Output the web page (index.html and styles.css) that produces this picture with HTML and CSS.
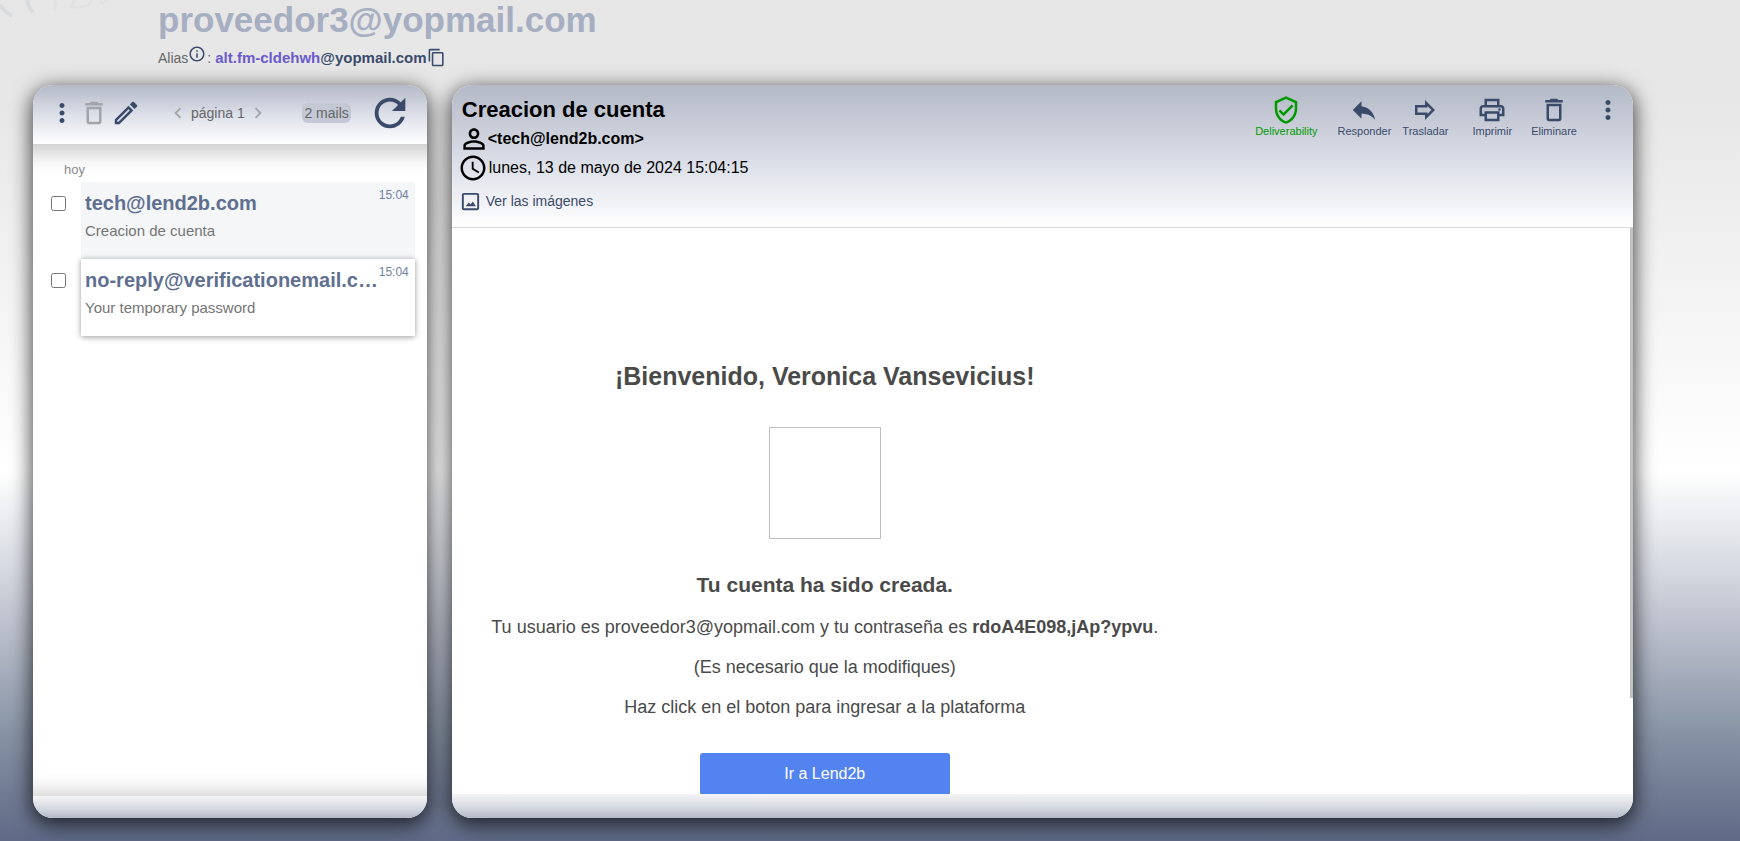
FILE: index.html
```html
<!DOCTYPE html>
<html lang="es">
  <head>
    <meta charset="utf-8" />
    <meta name="viewport" content="width=device-width, initial-scale=1" />
    <link rel="stylesheet" href="styles.css">
    <title>YOPmail - proveedor3</title>
  </head>
  <body>
    <svg class="scribble" width="140" height="20" viewBox="0 0 140 20" aria-hidden="true">
      <path class="wide" d="M0 5q5 7 12 11M28 0q-1 7 5 12" />
      <path d="M55 0q2 5-1 10M74 0l-3 7q12 2 20-4l1-3M101 0v4l7-4" />
    </svg>

    <header class="top">
      <h1 class="address">proveedor3@yopmail.com</h1>
      <div class="alias">
        <span>Alias</span>
        <svg class="alias-info" width="18" height="18" viewBox="0 0 24 24"><path d="M11 7h2v2h-2zm0 4h2v6h-2zm1-9C6.480 2 2 6.480 2 12s4.480 10 10 10 10-4.480 10-10S17.520 2 12 2zm0 18c-4.410 0-8-3.590-8-8s3.590-8 8-8 8 3.590 8 8-3.590 8-8 8z" /></svg>
        <span class="colon">:</span>
        <b><span class="alias-name">alt.fm-cldehwh</span>@yopmail.com</b>
        <button type="button" class="icon-btn" aria-label="Copiar">
          <svg width="19" height="19" viewBox="0 0 24 24"><path d="M16 1H4c-1.100 0-2 .900-2 2v14h2V3h12V1zm3 4H8c-1.100 0-2 .900-2 2v14c0 1.100.900 2 2 2h11c1.100 0 2-.900 2-2V7c0-1.100-.900-2-2-2zm0 16H8V7h11v14z" /></svg>
        </button>
      </div>
    </header>

    <main class="panels">
      <section class="panel inbox">
        <div class="inbox-bar">
          <button type="button" class="icon-btn" aria-label="Menú">
            <svg width="30" height="30" viewBox="0 0 24 24"><path d="M12 8c1.100 0 2-.900 2-2s-.900-2-2-2-2 .900-2 2 .900 2 2 2zm0 2c-1.100 0-2 .900-2 2s.900 2 2 2 2-.900 2-2-.900-2-2-2zm0 6c-1.100 0-2 .900-2 2s.900 2 2 2 2-.900 2-2-.900-2-2-2z" /></svg>
          </button>
          <button type="button" class="icon-btn off" aria-label="Eliminar" disabled>
            <svg width="30" height="30" viewBox="0 0 24 24"><path d="M6 19c0 1.100.900 2 2 2h8c1.100 0 2-.900 2-2V7H6v12zM8 9h8v10H8V9zm7.500-5l-1-1h-5l-1 1H5v2h14V4z" /></svg>
          </button>
          <button type="button" class="icon-btn" aria-label="Redactar">
            <svg width="30" height="30" viewBox="0 0 24 24"><path d="M14.060 9.020l.920.920L5.920 19H5v-.920l9.060-9.060M17.660 3c-.250 0-.510.100-.700.290l-1.830 1.830 3.750 3.750 1.830-1.830c.390-.390.390-1.020 0-1.410l-2.340-2.340c-.200-.200-.450-.290-.710-.290zm-3.600 3.190L3 17.250V21h3.750L17.810 9.940l-3.750-3.750z" /></svg>
          </button>
          <div class="pager">
            <button type="button" class="icon-btn off" aria-label="Anterior" disabled>
              <svg width="22" height="22" viewBox="0 0 24 24"><path d="M15.410 7.410L14 6l-6 6 6 6 1.410-1.410L10.830 12z" /></svg>
            </button>
            <span>página 1</span>
            <button type="button" class="icon-btn off" aria-label="Siguiente" disabled>
              <svg width="22" height="22" viewBox="0 0 24 24"><path d="M10 6L8.590 7.410 13.170 12l-4.580 4.590L10 18l6-6z" /></svg>
            </button>
          </div>
          <span class="count">2 mails</span>
          <button type="button" class="icon-btn refresh" aria-label="Actualizar">
            <svg width="46" height="46" viewBox="0 0 24 24"><path d="M17.650 6.350C16.200 4.900 14.210 4 12 4c-4.420 0-7.990 3.580-7.990 8s3.570 8 7.990 8c3.730 0 6.840-2.550 7.730-6h-2.080c-.820 2.330-3.040 4-5.650 4-3.310 0-6-2.690-6-6s2.690-6 6-6c1.660 0 3.140.690 4.220 1.780L13 11h7V4l-2.350 2.350z" /></svg>
          </button>
        </div>

        <div class="inbox-list">
          <div class="day">hoy</div>
          <div class="mail">
            <input type="checkbox" aria-label="tech@lend2b.com" />
            <a href="#" class="mail-card current">
              <span class="mail-line">
                <span class="sender">tech@lend2b.com</span>
                <span class="time">15:04</span>
              </span>
              <span class="subject">Creacion de cuenta</span>
            </a>
          </div>
          <div class="mail">
            <input type="checkbox" aria-label="no-reply@verificationemail.com" />
            <a href="#" class="mail-card">
              <span class="mail-line">
                <span class="sender">no-reply@verificationemail.com</span>
                <span class="time">15:04</span>
              </span>
              <span class="subject">Your temporary password</span>
            </a>
          </div>
        </div>
        <div class="panel-foot"></div>
      </section>

      <section class="panel reader">
        <div class="reader-head">
          <div class="meta">
            <h2>Creacion de cuenta</h2>
            <div class="from">
              <svg width="32" height="32" viewBox="0 0 24 24"><path d="M12 5.900c1.160 0 2.100.940 2.100 2.100s-.940 2.100-2.100 2.100S9.900 9.160 9.900 8s.940-2.100 2.100-2.100m0 9c2.970 0 6.100 1.460 6.100 2.100v1.100H5.900V17c0-.640 3.130-2.100 6.100-2.100M12 4C9.790 4 8 5.790 8 8s1.790 4 4 4 4-1.790 4-4-1.790-4-4-4zm0 9c-2.670 0-8 1.340-8 4v3h16v-3c0-2.660-5.330-4-8-4z" /></svg>
              <b>&lt;tech@lend2b.com&gt;</b>
            </div>
            <div class="date">
              <svg width="30" height="30" viewBox="0 0 24 24"><path d="M11.990 2C6.470 2 2 6.480 2 12s4.470 10 9.990 10C17.520 22 22 17.520 22 12S17.520 2 11.990 2zM12 20c-4.420 0-8-3.580-8-8s3.580-8 8-8 8 3.580 8 8-3.580 8-8 8zm.500-13H11v6l5.250 3.150.750-1.230-4.500-2.670z" /></svg>
              <span>lunes, 13 de mayo de 2024 15:04:15</span>
            </div>
            <button type="button" class="show-images">
              <svg width="23" height="23" viewBox="0 0 24 24"><path d="M19 5v14H5V5h14m0-2H5c-1.100 0-2 .900-2 2v14c0 1.100.900 2 2 2h14c1.100 0 2-.900 2-2V5c0-1.100-.900-2-2-2zM14.500 12l-2.500 3.200-1.800-2.100L7 17h10.500z" /></svg>
              Ver las imágenes
            </button>
          </div>
          <div class="actions">
            <button type="button" class="action safe">
              <svg width="30" height="30" viewBox="0 0 24 24"><path d="M12 1L3 5v6c0 5.550 3.840 10.740 9 12 5.160-1.260 9-6.450 9-12V5l-9-4zm7 10c0 4.520-2.980 8.690-7 9.930-4.020-1.240-7-5.410-7-9.930V6.300l7-3.110 7 3.110V11zm-11.590.590L6 13l4 4 8-8-1.410-1.420L10 14.170z" /></svg>
              Deliverability
            </button>
            <button type="button" class="action">
              <svg width="30" height="30" viewBox="0 0 24 24"><path d="M10 9V5l-7 7 7 7v-4.100c5 0 8.500 1.600 11 5.100-1-5-4-10-11-11z" /></svg>
              Responder
            </button>
            <button type="button" class="action">
              <svg width="30" height="30" viewBox="0 0 24 24"><path fill-rule="evenodd" d="M12 4v4H4v8h8v4l8-8zM6 10h8V8.800L17.200 12 14 15.200V14H6z" /></svg>
              Trasladar
            </button>
            <button type="button" class="action print">
              <svg width="30" height="30" viewBox="0 0 24 24"><path d="M19 8h-1V3H6v5H5c-1.660 0-3 1.340-3 3v6h4v4h12v-4h4v-6c0-1.660-1.340-3-3-3zM8 5h8v3H8V5zm8 12v2H8v-4h8v2zm2-2v-2H6v2H4v-4c0-.550.450-1 1-1h14c.550 0 1 .450 1 1v4h-2z" /><circle cx="18" cy="11.500" r="1" /></svg>
              Imprimir
            </button>
            <button type="button" class="action">
              <svg width="30" height="30" viewBox="0 0 24 24"><path d="M6 19c0 1.100.900 2 2 2h8c1.100 0 2-.900 2-2V7H6v12zM8 9h8v10H8V9zm7.500-5l-1-1h-5l-1 1H5v2h14V4z" /></svg>
              Eliminare
            </button>
            <button type="button" class="action more" aria-label="Más">
              <svg width="30" height="30" viewBox="0 0 24 24"><path d="M12 8c1.100 0 2-.900 2-2s-.900-2-2-2-2 .900-2 2 .900 2 2 2zm0 2c-1.100 0-2 .900-2 2s.900 2 2 2 2-.900 2-2-.900-2-2-2zm0 6c-1.100 0-2 .900-2 2s.900 2 2 2 2-.900 2-2-.900-2-2-2z" /></svg>
            </button>
          </div>
        </div>

        <div class="reader-body">
          <article class="message">
            <h3>¡Bienvenido, Veronica Vansevicius!</h3>
            <div class="blocked-image"></div>
            <h4>Tu cuenta ha sido creada.</h4>
            <p>Tu usuario es proveedor3@yopmail.com y tu contraseña es <b>rdoA4E098,jAp?ypvu</b>.</p>
            <p>(Es necesario que la modifiques)</p>
            <p>Haz click en el boton para ingresar a la plataforma</p>
            <a href="#" class="cta">Ir a Lend2b</a>
          </article>
          <div class="scroll-thumb"></div>
        </div>
        <div class="panel-foot"></div>
      </section>
    </main>
  </body>
</html>
```

FILE: styles.css
```css
* {
  box-sizing: border-box;
}
body {
  display: flex;
  flex-direction: column;
  height: 100vh;
  margin: 0;
  overflow: hidden;
  font-family: "Liberation Sans", Arial, sans-serif;
  font-size: 14px;
  color: #666;
  background: linear-gradient(
    #e6e6e6,
    #e7e7e7 12%,
    #fff 56%,
    #d4d8e0 68%,
    #b6bbc8 76%,
    #8490a2 88%,
    #606a87
  );
}
svg {
  display: block;
  flex: none;
  fill: currentColor;
}
button {
  padding: 0;
  border: 0;
  background: none;
  font: inherit;
  color: #3a4a6b;
  cursor: pointer;
}
h1,
h2,
h3,
h4,
p {
  margin: 0;
}
a {
  color: inherit;
  text-decoration: none;
}
.icon-btn.off {
  color: #a2a4aa;
}
.scribble {
  position: absolute;
  top: 0;
  left: 0;
  fill: none;
  stroke: #dfe0e2;
  stroke-width: 2;
}
.scribble .wide {
  stroke: #d9dcdf;
  stroke-width: 4;
}

/* address */
.top {
  flex: none;
  height: 85px;
  padding-left: 158px;
}
.address {
  font-size: 35px;
  line-height: 40px;
  color: #a6aec2;
}
.alias {
  display: flex;
  align-items: center;
  height: 35px;
  color: #666;
}
.alias b {
  font-size: 15px;
  color: #3a4a6b;
}
.alias-info {
  align-self: flex-start;
  margin: 5px 1px 0 0;
  color: #3a4a6b;
}
.colon {
  margin-right: 4px;
}
.alias .alias-name {
  color: #6a5acd;
}

/* panels */
.panels {
  display: flex;
  flex: 1;
  gap: 25px;
  min-height: 0;
  padding: 0 107px 23px 33px;
}
.panel {
  display: flex;
  flex-direction: column;
  min-width: 0;
  overflow: hidden;
  border-radius: 20px;
  background: #fff;
  box-shadow: 0 5px 20px 2px rgba(0, 0, 0, 0.7);
}
.panel-foot {
  flex: none;
  height: 22px;
  background: linear-gradient(#f5f5f6, #d2d6df 60%, #b4b9c7);
}

/* inbox */
.inbox {
  flex: 1 1 25%;
}
.inbox-bar {
  display: flex;
  flex: none;
  align-items: center;
  height: 59px;
  padding: 0 14px 4px;
  background: linear-gradient(#b4b9c7, #dcdfe8 50%, #fff);
}
.inbox-bar .icon-btn {
  margin-right: 2px;
}
.pager {
  display: flex;
  align-items: center;
  margin: 0 auto 0 22px;
}
.pager .icon-btn {
  margin: 0 2px;
}
.count {
  padding: 2px 2px;
  border-radius: 6px;
  background: #c3c8d4;
}
.inbox-bar .refresh {
  margin: 0 0 0 16px;
}
.inbox-list {
  flex: 1;
  padding: 17px 12px 0 10px;
  box-shadow: inset 0 30px 20px -20px rgba(0, 0, 0, 0.2), inset 0 -24px 20px -20px rgba(0, 0, 0, 0.2);
}
.day {
  height: 21px;
  padding-left: 21px;
  font-size: 13px;
  line-height: 18px;
  color: #8a8a8a;
}
.mail {
  display: flex;
}
.mail input {
  width: 15px;
  height: 15px;
  margin: 14px 15px 0 8px;
}
.mail-card {
  flex: 1;
  min-width: 0;
  height: 77px;
  padding: 6px 6px 0 4px;
  box-shadow: 0 1px 6px rgba(0, 0, 0, 0.4);
}
.mail-card.current {
  background: #f4f6f8;
  box-shadow: none;
}
.mail-line {
  display: flex;
}
.sender {
  flex: 1;
  overflow: hidden;
  font-size: 20px;
  font-weight: bold;
  line-height: 30px;
  color: #5f6f90;
  text-overflow: ellipsis;
  white-space: nowrap;
}
.time {
  font-size: 12px;
  line-height: 14px;
  color: #7080a0;
}
.subject {
  display: block;
  font-size: 15px;
  line-height: 26px;
  color: #757575;
}

/* reader */
.reader {
  flex: 1 1 75%;
}
.reader .panel-foot {
  height: 24px;
}
.reader-head {
  display: flex;
  flex: none;
  justify-content: space-between;
  height: 143px;
  padding: 10px 10px 0 6px;
  border-bottom: 1px solid #d9d9d9;
  background: linear-gradient(#b4b9c7, #dcdfe8 55%, #fff);
}
.meta {
  font-size: 16px;
  color: #000;
}
.meta h2 {
  padding-left: 4px;
  font-size: 22px;
  line-height: 30px;
}
.from,
.date {
  display: flex;
  align-items: center;
  height: 30px;
}
.from {
  height: 28px;
}
.from svg {
  margin-right: -2px;
}
.date {
  gap: 1px;
}
.show-images {
  display: flex;
  gap: 4px;
  align-items: center;
  height: 36px;
  padding-left: 1px;
  font-size: 14px;
}
.actions {
  display: flex;
  align-items: flex-start;
}
.action {
  display: flex;
  flex-direction: column;
  align-items: center;
  margin-right: 11px;
  font-size: 11px;
  line-height: 12px;
}
.action.safe {
  margin-right: 20px;
  color: #009a00;
}
.action.print {
  margin: 0 19px 0 13px;
}
.action.more {
  margin: 0 0 0 5px;
}
.reader-body {
  position: relative;
  flex: 1;
  overflow: hidden;
}
.message {
  display: flex;
  flex-direction: column;
  align-items: center;
  max-width: 700px;
  margin-left: 23px;
  padding-top: 132px;
  font-size: 18px;
  color: #4a4a4a;
}
.message h3 {
  font-size: 25px;
  line-height: 32px;
}
.blocked-image {
  width: 112px;
  height: 112px;
  margin: 35px 0 30px;
  border: 1px solid #c0c0c0;
}
.message h4 {
  margin-bottom: 6px;
  font-size: 21px;
  line-height: 32px;
}
.message p {
  line-height: 40px;
}
.cta {
  width: 250px;
  margin-top: 26px;
  border-radius: 3px;
  background: #5383f1;
  font-size: 16px;
  line-height: 42px;
  text-align: center;
  color: #fff;
}
.scroll-thumb {
  position: absolute;
  top: 0;
  right: 0;
  width: 3px;
  height: 83%;
  background: #c1c1c1;
}
```
